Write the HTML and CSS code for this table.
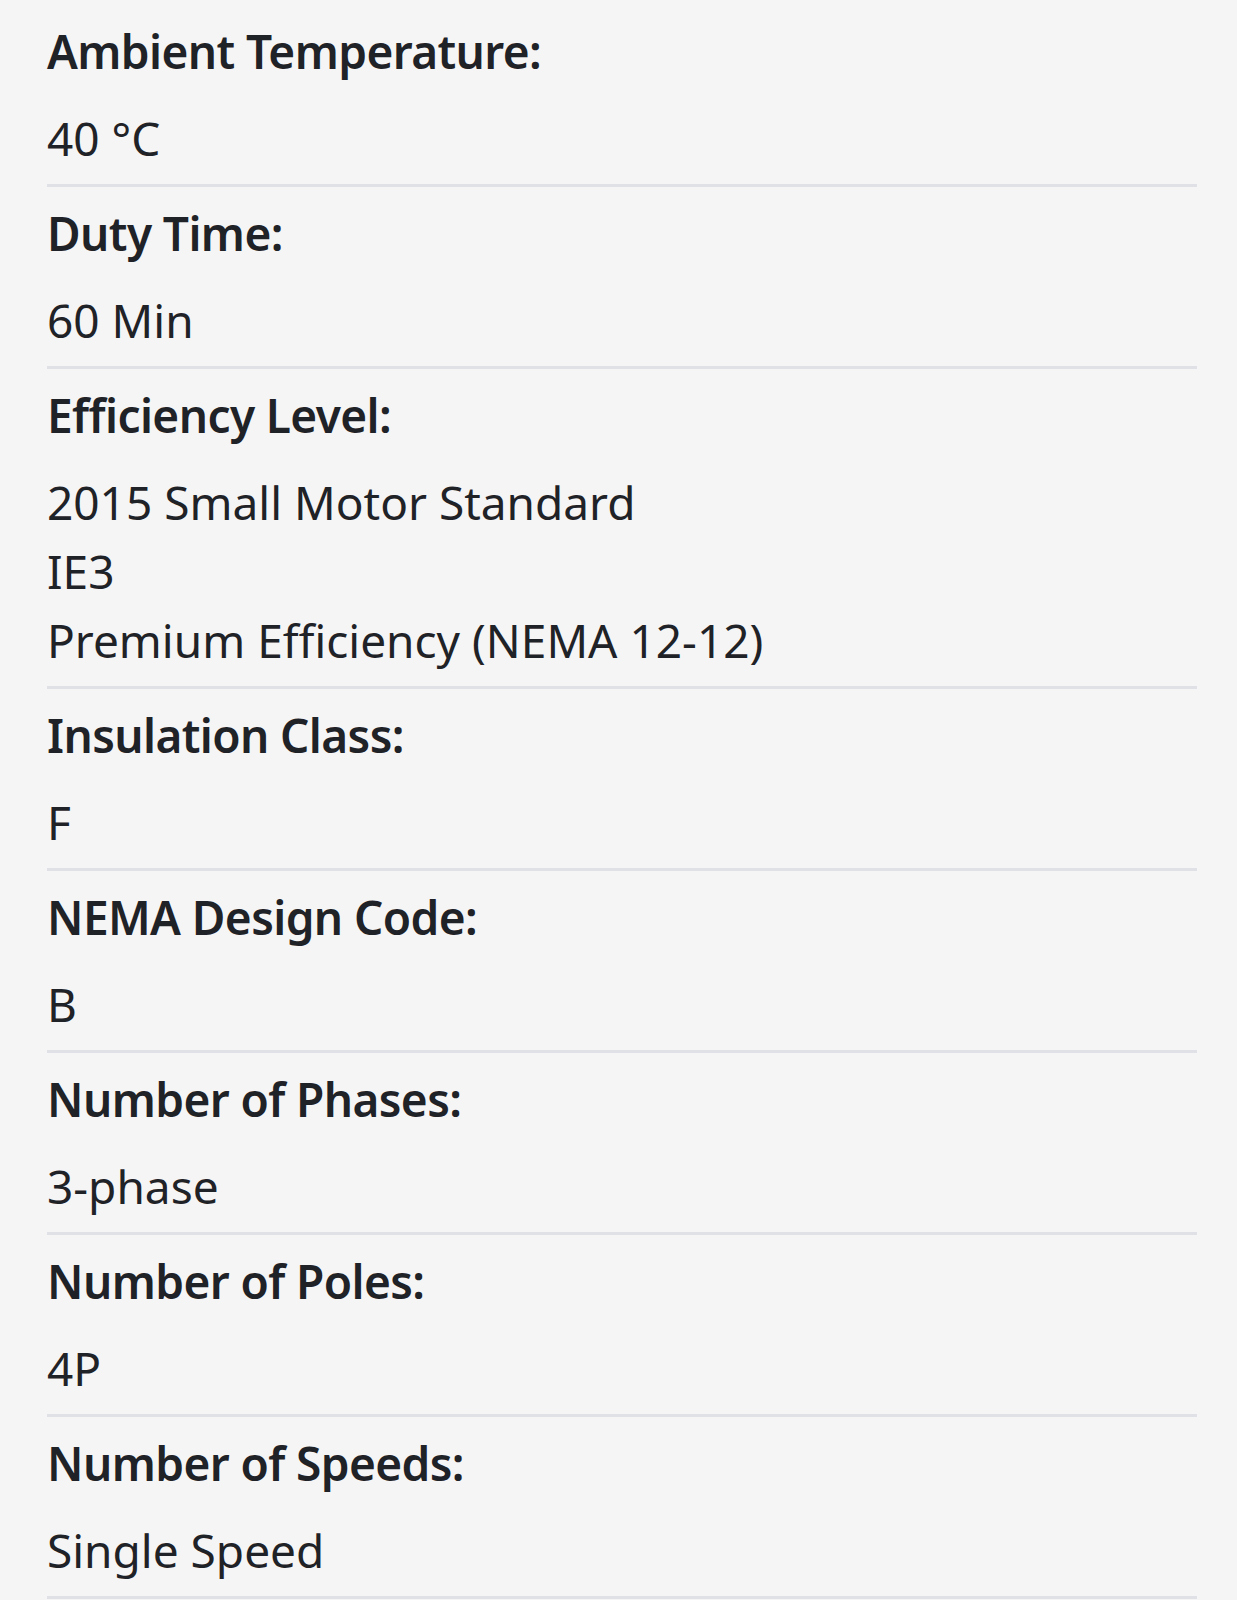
FILE: index.html
```html
<!DOCTYPE html>
<html lang="en">
<head>
<meta charset="utf-8">
<title>Specifications</title>
<link rel="stylesheet" href="styles.css">
</head>
<body>
<dl class="specs">
  <div class="row">
    <dt class="label">Ambient Temperature:</dt>
    <dd class="value">40 °C</dd>
  </div>
  <div class="row">
    <dt class="label">Duty Time:</dt>
    <dd class="value">60 Min</dd>
  </div>
  <div class="row">
    <dt class="label">Efficiency Level:</dt>
    <dd class="value">2015 Small Motor Standard</dd>
    <dd class="value">IE3</dd>
    <dd class="value">Premium Efficiency (NEMA 12-12)</dd>
  </div>
  <div class="row">
    <dt class="label">Insulation Class:</dt>
    <dd class="value">F</dd>
  </div>
  <div class="row">
    <dt class="label">NEMA Design Code:</dt>
    <dd class="value">B</dd>
  </div>
  <div class="row">
    <dt class="label">Number of Phases:</dt>
    <dd class="value">3-phase</dd>
  </div>
  <div class="row">
    <dt class="label">Number of Poles:</dt>
    <dd class="value">4P</dd>
  </div>
  <div class="row">
    <dt class="label">Number of Speeds:</dt>
    <dd class="value">Single Speed</dd>
  </div>
</dl>
</body>
</html>
```

FILE: styles.css
```css
html, body {
  margin: 0;
  padding: 0;
  background: #f5f5f5;
}

body {
  font-family: "Noto Sans", "Open Sans", sans-serif;
  color: #1f2226;
}

.specs {
  margin: 0 40px 0 47px;
  padding-top: 5px;
  display: flex;
  flex-direction: column;
}

.row {
  display: flex;
  flex-direction: column;
  padding: 12px 0 11px;
  border-bottom: 3px solid #dfe1e6;
}

.label {
  font-size: 46px;
  line-height: 69px;
  font-weight: 600;
  letter-spacing: -0.6px;
  margin: 0 0 18px;
}

.value {
  font-size: 46px;
  line-height: 69px;
  font-weight: 400;
  margin: 0;
}
```
